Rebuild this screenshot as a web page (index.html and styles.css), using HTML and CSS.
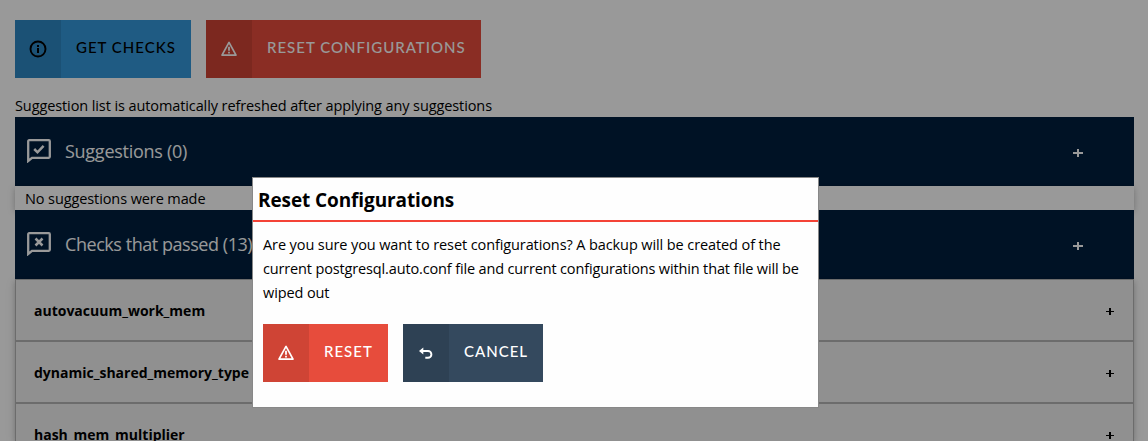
FILE: index.html
```html
<!DOCTYPE html>
<html lang="en">
<head>
<meta charset="utf-8">
<title>Reset Configurations</title>
<link rel="stylesheet" href="styles.css">
</head>
<body>
<svg class="sprite" aria-hidden="true">
  <symbol id="i-warn" viewBox="0 0 16 16"><path d="M8 1.4 1 14.1h14z" fill="none" stroke="currentColor" stroke-width="1.7" stroke-linejoin="round"/><path d="M8 5.7v4M8 10.7v1.7" fill="none" stroke="currentColor" stroke-width="1.8"/></symbol>
  <symbol id="i-info" viewBox="0 0 18 18"><circle cx="9" cy="9" r="7.5" fill="none" stroke="currentColor" stroke-width="1.9"/><path d="M8 5h2v2H8zM8 8h2v5H8z" fill="currentColor"/></symbol>
  <symbol id="i-undo" viewBox="0 0 14 12"><path d="M2 4h7a3.4 3.4 0 0 1 0 6.8H6.3" fill="none" stroke="currentColor" stroke-width="1.9"/><path d="M0 4 4.3.6v6.8z" fill="currentColor"/></symbol>
</svg>
<main class="page">
  <div class="actions">
    <button class="btn btn-blue"><span class="btn-icon"><svg class="ic-info"><use href="#i-info"/></svg></span><span class="btn-label">GET CHECKS</span></button>
    <button class="btn btn-red"><span class="btn-icon"><svg class="ic-warn"><use href="#i-warn"/></svg></span><span class="btn-label">RESET CONFIGURATIONS</span></button>
  </div>
  <p class="note">Suggestion list is automatically refreshed after applying any suggestions</p>
  <section>
    <h2 class="head"><svg class="ic-chat" viewBox="0 0 24 24"><path d="M1.2 22V2.2Q1.2 1.2 2.2 1.2h19.6Q22.8 1.2 22.8 2.2v15.6Q22.8 18.8 21.8 18.8H5z" fill="none" stroke="currentColor" stroke-width="2.3"/><path d="m7.2 10 3.3 3.3 6.1-6.5" fill="none" stroke="currentColor" stroke-width="2.5"/></svg><span class="head-text">Suggestions (0)</span><i class="plus"></i></h2>
    <div class="panel">No suggestions were made</div>
  </section>
  <section>
    <h2 class="head"><svg class="ic-chat" viewBox="0 0 24 24"><path d="M1.2 22V2.2Q1.2 1.2 2.2 1.2h19.6Q22.8 1.2 22.8 2.2v15.6Q22.8 18.8 21.8 18.8H5z" fill="none" stroke="currentColor" stroke-width="2.3"/><path d="m8.5 6.5 7 7m0-7-7 7" fill="none" stroke="currentColor" stroke-width="2.5"/></svg><span class="head-text head-text-tight">Checks that passed (13)</span><i class="plus"></i></h2>
    <div class="list">
      <div class="row"><span>autovacuum_work_mem</span><i class="plus"></i></div>
      <div class="row"><span>dynamic_shared_memory_type</span><i class="plus"></i></div>
      <div class="row row-cut"><span>hash_mem_multiplier</span><i class="plus"></i></div>
    </div>
  </section>
</main>
<div class="overlay">
  <div class="dialog" role="dialog">
    <h1 class="dialog-title">Reset Configurations</h1>
    <p class="dialog-body">Are you sure you want to reset configurations? A backup will be created of the<br><span class="tight">current postgresql.auto.conf file and current configurations within that file will be</span><br>wiped out</p>
    <div class="dialog-actions">
      <button class="btn btn-red"><span class="btn-icon"><svg class="ic-warn"><use href="#i-warn"/></svg></span><span class="btn-label">RESET</span></button>
      <button class="btn btn-slate"><span class="btn-icon"><svg class="ic-undo"><use href="#i-undo"/></svg></span><span class="btn-label">CANCEL</span></button>
    </div>
  </div>
</div>
</body>
</html>
```
FILE: styles.css
```css
* { box-sizing: border-box; }
html, body { margin: 0; height: 441px; overflow: hidden; background: #fff; }
body { font: 14.5px/24px "Open Sans", "Noto Sans", sans-serif; letter-spacing: -.1px; color: #000; }
h1, h2, p { margin: 0; }
svg { display: block; flex: none; }
.sprite { position: absolute; width: 0; height: 0; }
.page { height: 441px; overflow: hidden; padding: 20px 14px 0 15px; }
.actions, .dialog-actions { display: flex; gap: 15px; }
.btn { display: flex; height: 58px; padding: 0; border: 0; color: #fff; font: 500 15px/20px Lato, sans-serif; letter-spacing: 1px; white-space: nowrap; }
.btn-icon { display: flex; align-items: center; justify-content: center; width: 46px; height: 58px; background: rgba(0, 0, 0, .1); }
.btn-label { padding: 17px 14px 0 15px; }
.btn-blue { width: 176px; background: #3498db; color: #000; }
.btn-red { background: #e74c3c; }
.actions .btn-red { width: 275px; }
.dialog .btn-red { width: 125px; }
.btn-slate { width: 140px; background: #34495e; }
.ic-warn { width: 16px; height: 16px; }
.ic-info { width: 18px; height: 18px; }
.ic-undo { width: 14px; height: 12px; }
.note { height: 39px; padding-top: 16px; white-space: nowrap; }
.head { display: flex; align-items: center; height: 69px; padding: 0 51px 0 12px; background: #001f3f; color: #fff; font-size: 18px; font-weight: 400; white-space: nowrap; }
.ic-chat { width: 24px; height: 24px; margin-top: -1px; }
.head-text { margin: -2px 0 0 14px; letter-spacing: -.27px; }
.head-text-tight { letter-spacing: -.45px; }
.plus { width: 10px; height: 10px; margin-left: auto; background: linear-gradient(currentColor, currentColor) center / 10px 2px no-repeat, linear-gradient(currentColor, currentColor) center / 2px 8px no-repeat; }
.head .plus { margin-top: 3px; }
.panel { height: 24px; padding: 1px 0 0 10px; box-shadow: 0 2px 5px rgba(0, 0, 0, .16), 0 2px 10px rgba(0, 0, 0, .12); }
.list { box-shadow: 0 2px 5px rgba(0, 0, 0, .16), 0 2px 10px rgba(0, 0, 0, .12); }
.row { display: flex; align-items: center; height: 62px; padding: 2px 18px 0 18px; border: 1px solid #b4b4b4; background: #f1f1f1; font-size: 14px; letter-spacing: 0; font-weight: 700; }
.row-cut { align-items: flex-start; height: 38px; padding-top: 19px; border-bottom: 0; }
.row .plus { background: linear-gradient(currentColor, currentColor) center / 8px 1px no-repeat, linear-gradient(currentColor, currentColor) center / 2px 7px no-repeat; }
.row-cut .plus { margin-top: 7px; }
.overlay { position: absolute; inset: 0; padding: 177px 0 0 252px; background: rgba(0, 0, 0, .4); }
.dialog { width: 567px; height: 231px; border: 1px solid #888; background: #fefefe; }
.dialog-title { height: 44px; padding: 10px 0 0 5px; border-bottom: 2px solid #f44336; font-size: 19px; line-height: 24px; font-weight: 700; }
.dialog-body { padding: 11px 0 0 10px; white-space: nowrap; }
.tight { letter-spacing: -.145px; }
.dialog-actions { padding: 19px 0 0 10px; }
```
